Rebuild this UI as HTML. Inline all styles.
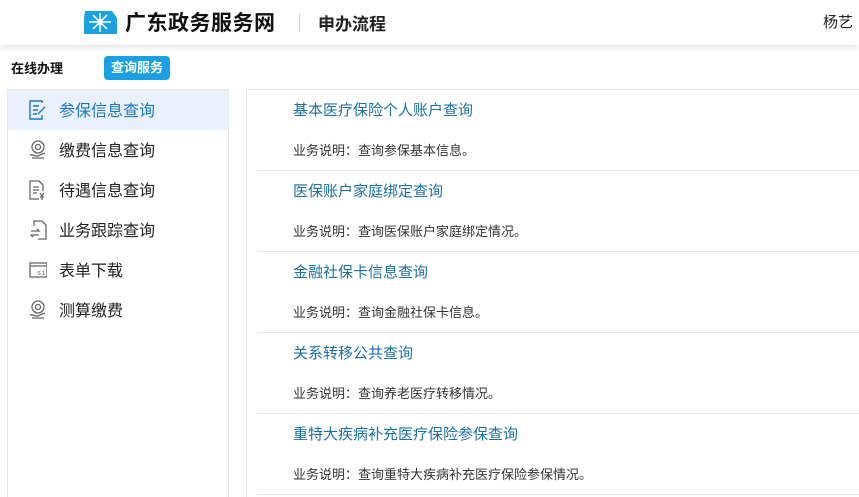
<!DOCTYPE html>
<html><head><meta charset="utf-8"><style>
*{margin:0;padding:0;box-sizing:border-box}
html{width:859px;height:497px;overflow:hidden}
body{width:859px;height:497px;overflow:hidden;background:#fff;font-family:"Liberation Sans","Noto Sans CJK SC",sans-serif;position:relative}
.hd{position:absolute;left:0;top:0;width:859px;height:45px;background:#fff;box-shadow:0 2px 6px rgba(0,0,0,.12);z-index:2}
.logo{position:absolute;left:83px;top:11px}
.brand{position:absolute;left:125px;top:7px;font-size:21px;font-weight:bold;color:#111;letter-spacing:0.5px}
.sep{position:absolute;left:299px;top:14px;width:1px;height:18px;background:#ccc}
.sub{position:absolute;left:318px;top:10px;font-size:17px;font-weight:bold;color:#222}
.user{position:absolute;left:823px;top:11px;font-size:15px;color:#222}
.t1{position:absolute;left:11px;top:58px;font-size:13px;font-weight:bold;color:#111}
.tag{position:absolute;left:104px;top:56px;width:66px;height:24px;border-radius:4px;background:#1ba0e2;color:#fff;font-size:13px;font-weight:bold;text-align:center;line-height:23px}
.left{position:absolute;left:7px;top:89px;width:222px;height:408px;border:1px solid #e8e8e8;border-bottom:none}
.it{position:absolute;left:0;width:220px;height:40px;font-size:16px;color:#222}
.it.on{background:#ebf0fd;color:#1a78c2}
.it span{position:absolute;left:51px;top:7px}
.it svg{position:absolute;left:21px;top:10px}
.right{position:absolute;left:246px;top:89px;width:613px;height:408px;border:1px solid #e8e8e8;border-bottom:none;border-right:none}
.row{position:absolute;left:10px;width:620px;height:81px;border-bottom:1px solid #e6e6e6}
.row .a{position:absolute;left:36px;top:9px;font-size:15px;color:#1a6fa8}
.row .b{position:absolute;left:36px;top:50px;font-size:13px;color:#333}
</style></head><body>
<div class="hd">
<svg class="logo" width="35" height="23" viewBox="0 0 35 23"><path d="M2 0h27l5 7v16H1V7z" fill="#1ba0e2"/><g stroke="#fff" stroke-width="1.5"><line x1="17" y1="2" x2="17" y2="21"/><line x1="6" y1="11" x2="28" y2="11"/><line x1="10" y1="4" x2="24" y2="18"/><line x1="24" y1="4" x2="10" y2="18"/></g><circle cx="17" cy="11" r="3" fill="#fff"/></svg>
<div class="brand">广东政务服务网</div>
<div class="sep"></div>
<div class="sub">申办流程</div>
<div class="user">杨艺</div>
</div>
<div class="t1">在线办理</div>
<div class="tag">查询服务</div>
<div class="left">
<div class="it on" style="top:0"><svg width="18" height="20" viewBox="0 0 18 20" fill="none" stroke="#1a78c2" stroke-width="1.4"><path d="M13 3V1H1v18h12v-4"/><path d="M4 6h6M4 10h5M4 14h4"/><path d="M9 14l7-7"/></svg><span>参保信息查询</span></div>
<div class="it" style="top:40px"><svg width="18" height="20" viewBox="0 0 18 20" fill="none" stroke="#666" stroke-width="1.3"><circle cx="9" cy="7" r="6"/><circle cx="9" cy="7" r="2.5"/><path d="M1 15c4-1 6 3 10 0l5-2M3 18h12"/></svg><span>缴费信息查询</span></div>
<div class="it" style="top:80px"><svg width="18" height="20" viewBox="0 0 18 20" fill="none" stroke="#666" stroke-width="1.3"><path d="M10 19H1V1h9l4 4v6"/><path d="M4 7h6M4 10h6M4 13h4M11 13l2 3 2-3M13 16v4M11 17h4"/></svg><span>待遇信息查询</span></div>
<div class="it" style="top:120px"><svg width="18" height="20" viewBox="0 0 18 20" fill="none" stroke="#666" stroke-width="1.3"><path d="M5 6V1h8l4 4v14H9"/><path d="M2 11h8l-2-2M10 15H2l2 2"/></svg><span>业务跟踪查询</span></div>
<div class="it" style="top:160px"><svg width="18" height="20" viewBox="0 0 18 20" fill="none" stroke="#666" stroke-width="1.3"><rect x="1" y="3" width="17" height="14"/><path d="M1 6h17"/><text x="8" y="15" font-size="7" fill="#666" stroke="none" font-family="Liberation Mono">si</text></svg><span>表单下载</span></div>
<div class="it" style="top:200px"><svg width="18" height="20" viewBox="0 0 18 20" fill="none" stroke="#666" stroke-width="1.3"><circle cx="9" cy="7" r="6"/><circle cx="9" cy="7" r="2.5"/><path d="M1 15c4-1 6 3 10 0l5-2M3 18h12"/></svg><span>测算缴费</span></div>
</div>
<div class="right">
<div class="row" style="top:0"><div class="a">基本医疗保险个人账户查询</div><div class="b">业务说明：查询参保基本信息。</div></div>
<div class="row" style="top:81px"><div class="a">医保账户家庭绑定查询</div><div class="b">业务说明：查询医保账户家庭绑定情况。</div></div>
<div class="row" style="top:162px"><div class="a">金融社保卡信息查询</div><div class="b">业务说明：查询金融社保卡信息。</div></div>
<div class="row" style="top:243px"><div class="a">关系转移公共查询</div><div class="b">业务说明：查询养老医疗转移情况。</div></div>
<div class="row" style="top:324px"><div class="a">重特大疾病补充医疗保险参保查询</div><div class="b">业务说明：查询重特大疾病补充医疗保险参保情况。</div></div>
</div>
</body></html>
